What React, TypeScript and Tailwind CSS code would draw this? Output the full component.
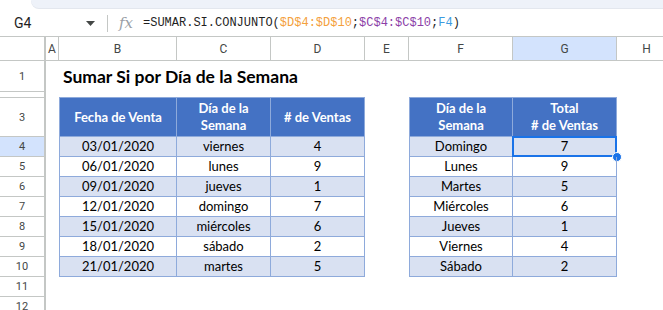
const ventas = [
  { fecha: "03/01/2020", dia: "viernes", n: 4 },
  { fecha: "06/01/2020", dia: "lunes", n: 9 },
  { fecha: "09/01/2020", dia: "jueves", n: 1 },
  { fecha: "12/01/2020", dia: "domingo", n: 7 },
  { fecha: "15/01/2020", dia: "miércoles", n: 6 },
  { fecha: "18/01/2020", dia: "sábado", n: 2 },
  { fecha: "21/01/2020", dia: "martes", n: 5 },
];

const totales = [
  { dia: "Domingo", n: 7 },
  { dia: "Lunes", n: 9 },
  { dia: "Martes", n: 5 },
  { dia: "Miércoles", n: 6 },
  { dia: "Jueves", n: 1 },
  { dia: "Viernes", n: 4 },
  { dia: "Sábado", n: 2 },
];

const columns = [
  { l: "A", w: "w-[13px]" },
  { l: "B", w: "w-[118px]" },
  { l: "C", w: "w-[94px]" },
  { l: "D", w: "w-[94px]" },
  { l: "E", w: "w-[44px]" },
  { l: "F", w: "w-[104px]" },
  { l: "G", w: "w-[104px]", sel: true },
  { l: "H", w: "w-[60px]" },
];

const rows = [
  { n: 1, h: "h-[31px]" },
  { n: 2, h: "h-[6px]", clip: true },
  { n: 3, h: "h-[39px]" },
  { n: 4, h: "h-[20px]", sel: true },
  { n: 5, h: "h-[20px]" },
  { n: 6, h: "h-[20px]" },
  { n: 7, h: "h-[20px]" },
  { n: 8, h: "h-[20px]" },
  { n: 9, h: "h-[20px]" },
  { n: 10, h: "h-[20px]" },
  { n: 11, h: "h-[20px]" },
  { n: 12, h: "h-[20px]" },
];

function App() {
  return (
    <div className="h-[310px] w-[663px] overflow-hidden bg-white font-['Roboto',sans-serif]">
      {/* toolbar edge */}
      <div className="h-[10px] pl-[31px]">
        <div className="h-[8px] rounded-bl-[10px] bg-[#eef2f9] shadow-[0_1px_0_#e3e7ee]" />
      </div>

      {/* formula bar */}
      <div className="flex h-[27px] items-center border-b border-[#c4c7c5]">
        <div className="flex w-[107px] items-center pl-[14px] pr-[12px]">
          <span className="text-[14px] text-[#1f1f1f]">G4</span>
          <svg className="ml-auto" width="9" height="5" viewBox="0 0 9 5">
            <path d="M0 0h9L4.5 5z" fill="#444746" />
          </svg>
        </div>
        <div className="h-[17px] w-px bg-[#c4c7c5]" />
        <span className="ml-[11px] w-[24px] font-['DejaVu_Serif',serif] text-[15px] italic text-[#9aa0a6]">
          fx
        </span>
        <span className="font-['Liberation_Mono',monospace] text-[12px] text-[#1f1f1f]">
          =SUMAR.SI.CONJUNTO(
          <span className="text-[#f4a03c]">$D$4:$D$10</span>;
          <span className="text-[#8c3fa8]">$C$4:$C$10</span>;
          <span className="text-[#3d9be0]">F4</span>)
        </span>
      </div>

      {/* column headers */}
      <div className="flex h-[24px] border-b border-[#c4c7c5]">
        <div className="w-[46px] shrink-0 border-r-2 border-[#c4c7c5]" />
        {columns.map((c) => (
          <div
            key={c.l}
            className={`${c.w} flex shrink-0 items-center justify-center border-r border-[#c4c7c5] text-[12px] text-[#444746] ${
              c.sel ? "bg-[#d3e3fd] text-[#0b57d0]" : ""
            }`}
          >
            {c.l}
          </div>
        ))}
      </div>

      <div className="flex">
        {/* row headers */}
        <div className="w-[46px] shrink-0 border-r-2 border-[#c4c7c5]">
          {rows.map((r) => (
            <div
              key={r.n}
              className={`${r.h} flex justify-center overflow-hidden border-b border-[#c4c7c5] text-[11px] leading-[13px] text-[#444746] ${
                r.clip ? "items-start pt-[3px]" : "items-center"
              } ${r.sel ? "bg-[#d3e3fd]" : ""}`}
            >
              {r.n}
            </div>
          ))}
        </div>

        {/* cells */}
        <div className="flex-1 pl-[13px] font-['Lato',sans-serif] text-[13px] text-black">
          <div className="flex h-[31px] items-end pb-[2px] pl-[4px] text-[17.5px] font-bold">
            Sumar Si por Día de la Semana
          </div>
          <div className="h-[5px]" />
          <div className="flex items-start gap-[44px]">
            <div className="border-l border-t border-[#8eaadb]">
              <div className="flex h-[39px] bg-[#4472c4] font-bold leading-[17px] text-white">
                <div className="flex w-[117px] items-center justify-center border-b border-r border-[#8eaadb]">
                  Fecha de Venta
                </div>
                <div className="flex w-[94px] items-center justify-center border-b border-r border-[#8eaadb] text-center">
                  Día de la
                  <br />
                  Semana
                </div>
                <div className="flex w-[94px] items-center justify-center border-b border-r border-[#8eaadb]">
                  # de Ventas
                </div>
              </div>
              {ventas.map((v, i) => (
                <div
                  key={v.fecha}
                  className={`flex h-[20px] ${i % 2 === 0 ? "bg-[#d9e1f2]" : "bg-white"}`}
                >
                  <div className="flex w-[117px] items-center justify-center border-b border-r border-[#8eaadb]">
                    {v.fecha}
                  </div>
                  <div className="flex w-[94px] items-center justify-center border-b border-r border-[#8eaadb]">
                    {v.dia}
                  </div>
                  <div className="flex w-[94px] items-center justify-center border-b border-r border-[#8eaadb]">
                    {v.n}
                  </div>
                </div>
              ))}
            </div>

            <div className="border-l border-t border-[#8eaadb]">
              <div className="flex h-[39px] bg-[#4472c4] text-center font-bold leading-[17px] text-white">
                <div className="flex w-[103px] items-center justify-center border-b border-r border-[#8eaadb]">
                  Día de la
                  <br />
                  Semana
                </div>
                <div className="flex w-[104px] items-center justify-center border-b border-r border-[#8eaadb]">
                  Total
                  <br /># de Ventas
                </div>
              </div>
              {totales.map((t, i) => (
                <div
                  key={t.dia}
                  className={`flex h-[20px] ${i % 2 === 0 ? "bg-[#d9e1f2]" : "bg-white"}`}
                >
                  <div className="flex w-[103px] items-center justify-center border-b border-r border-[#8eaadb]">
                    {t.dia}
                  </div>
                  <div className="relative flex w-[104px] items-center justify-center border-b border-r border-[#8eaadb]">
                    {t.n}
                    {i === 0 && (
                      <>
                        <div className="absolute inset-[-1px] border-2 border-[#1a73e8]" />
                        <div className="absolute bottom-[-6px] right-[-6px] h-[10px] w-[10px] rounded-full border border-white bg-[#1a73e8]" />
                      </>
                    )}
                  </div>
                </div>
              ))}
            </div>
          </div>
        </div>
      </div>
    </div>
  );
}

export default App;
